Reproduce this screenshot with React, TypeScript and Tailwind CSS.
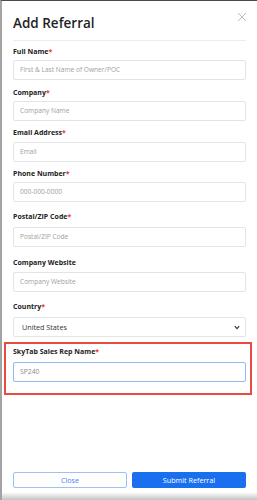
import React from "react";

const font = { fontFamily: '"Open Sans", "Noto Sans", Arial, sans-serif' };

function Label({ text, required, className = "" }: { text: string; required?: boolean; className?: string }) {
  return (
    <div className={`text-[7px] leading-[12px] font-bold text-[#222] ${className}`}>
      {text}
      {required && <span className="text-[#e5382f]">*</span>}
    </div>
  );
}

function Input({ placeholder, className = "" }: { placeholder: string; className?: string }) {
  return (
    <div
      className={`h-[20px] w-[233px] border border-[#e2e4e8] rounded-[2px] pl-[6px] flex items-center text-[6.6px] text-[#a0a0a0] bg-white ${className}`}
    >
      {placeholder}
    </div>
  );
}

export default function App() {
  return (
    <div
      style={font}
      className="w-[257px] h-[500px] bg-white border-l-2 border-l-[#a3a3a3] border-t border-t-[#4a4a4a] flex flex-col overflow-hidden"
    >
      <div className="pl-[11px] pr-[9px] flex flex-col">
        <div className="flex items-start justify-between">
          <h2 className="mt-[12px] text-[13.5px] leading-[20px] font-semibold text-[#1f1f1f]">Add Referral</h2>
          <svg className="mt-[11px] mr-[1px]" width="10" height="10" viewBox="0 0 10 10">
            <path d="M1 1L9 9M9 1L1 9" stroke="#b5b5b5" strokeWidth="0.9" fill="none" />
          </svg>
        </div>
        <div className="mt-[7px] h-px w-[233px] bg-[#ececec]" />

        <Label text="Full Name" required className="mt-[5px] mb-[2px]" />
        <Input placeholder="First & Last Name of Owner/POC" />

        <Label text="Company" required className="mt-[7px] mb-[2px]" />
        <Input placeholder="Company Name" />

        <Label text="Email Address" required className="mt-[6px] mb-[3px]" />
        <Input placeholder="Email" />

        <Label text="Phone Number" required className="mt-[6px] mb-[2px]" />
        <Input placeholder="000-000-0000" />

        <Label text="Postal/ZIP Code" required className="mt-[9px] mb-[4px]" />
        <Input placeholder="Postal/ZIP Code" />

        <Label text="Company Website" className="mt-[10px] mb-[3px]" />
        <Input placeholder="Company Website" />

        <Label text="Country" required className="mt-[9px] mb-[4px]" />
        <div className="h-[20px] w-[233px] border border-[#e2e4e8] rounded-[2px] pl-[8px] pr-[5px] flex items-center justify-between text-[7.2px] text-[#333]">
          <span>United States</span>
          <svg width="6" height="5" viewBox="0 0 6 5">
            <path d="M0.8 1.2L3 3.6L5.2 1.2" stroke="#333" strokeWidth="1.2" fill="none" />
          </svg>
        </div>

        <div className="mt-[5px] ml-[-9px] w-[248px] border-2 border-[#ea4b40] pl-[7px] pb-[11px]">
          <Label text="SkyTab Sales Rep Name" required className="mt-[2px] mb-[4px]" />
          <div className="h-[20px] w-[233px] border border-[#8fb8f5] rounded-[2px] pl-[6px] flex items-center text-[6.8px] text-[#8a8a8a]">
            SP240
          </div>
        </div>
      </div>

      <div className="flex-1" />

      <div className="pl-[11px] flex gap-[5px]">
        <button className="h-[16px] w-[114px] border border-[#9cc0f7] rounded-[2px] text-[7.2px] text-[#3f84f1] bg-white flex items-center justify-center">
          Close
        </button>
        <button className="h-[16px] w-[114px] rounded-[2px] text-[7.2px] text-white bg-[#1a6ff0] flex items-center justify-center">
          Submit Referral
        </button>
      </div>
      <div className="h-[4px]" />
      <div className="h-[8px] bg-gradient-to-b from-white to-[#c4c4c4]" />
    </div>
  );
}
